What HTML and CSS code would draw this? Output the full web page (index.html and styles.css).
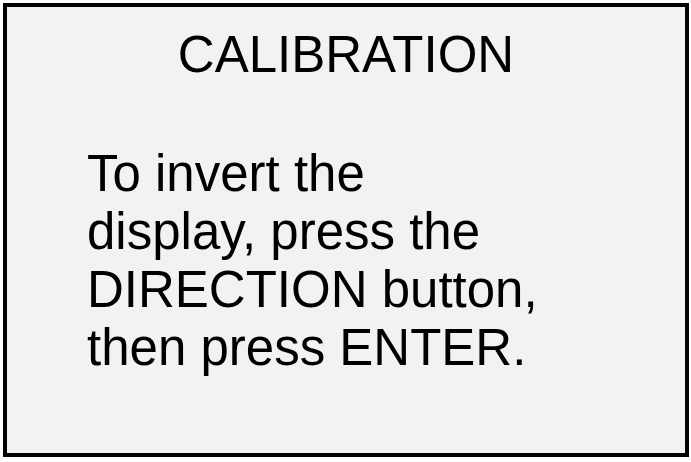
FILE: index.html
```html
<!DOCTYPE html>
<html>
<head>
<meta charset="utf-8">
<link rel="stylesheet" href="styles.css">
</head>
<body>
<div class="screen">
  <h1 class="title">CALIBRATION</h1>
  <p class="message">To invert the<br>display, press the<br>DIRECTION button,<br>then press ENTER.</p>
</div>
</body>
</html>
```

FILE: styles.css
```css
html, body {
  margin: 0;
  padding: 0;
  background: #ffffff;
}

body {
  padding: 3px 2px 5px 3px;
  font-family: "Liberation Sans", Arial, sans-serif;
  color: #000000;
}

.screen {
  box-sizing: border-box;
  width: 686px;
  height: 454px;
  border: 4px solid #000000;
  background: #f2f2f2;
  display: flex;
  flex-direction: column;
}

.title {
  margin: 0;
  padding-top: 18px;
  font-size: 51px;
  font-weight: normal;
  line-height: 60px;
  text-align: center;
}

.message {
  margin: 0;
  padding: 60px 0 0 80px;
  font-size: 51px;
  line-height: 58px;
}
```
